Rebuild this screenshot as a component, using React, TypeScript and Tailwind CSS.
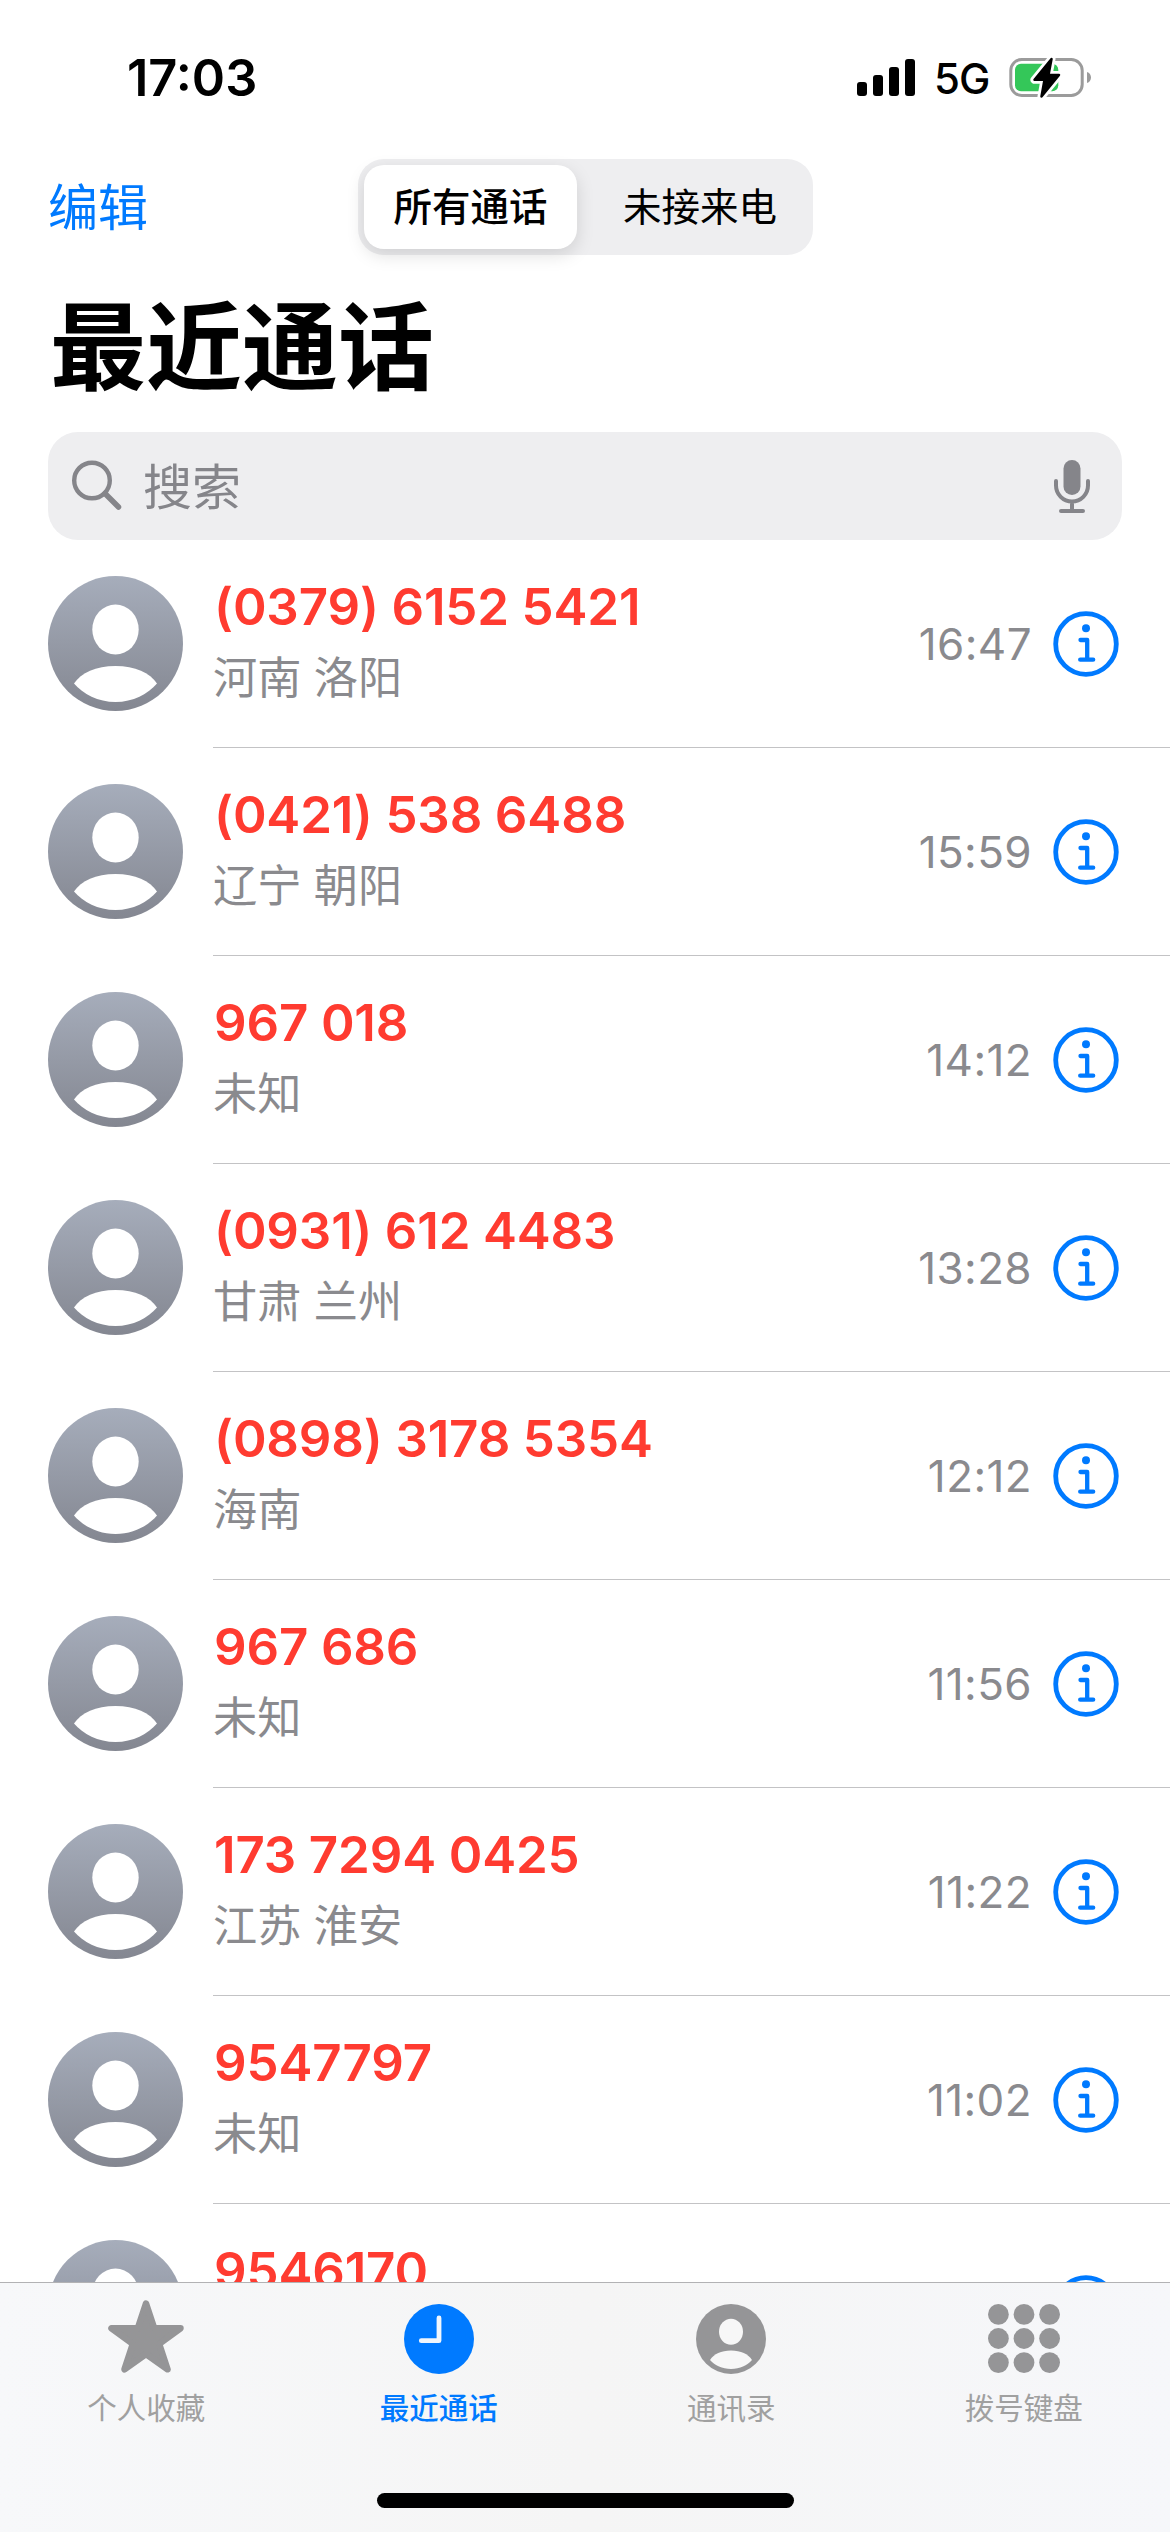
import { useState } from 'react';

interface Call {
  number: string;
  place: string;
  time: string;
}

const CALLS: Call[] = [
  { number: '(0379) 6152 5421', place: '河南 洛阳', time: '16:47' },
  { number: '(0421) 538 6488', place: '辽宁 朝阳', time: '15:59' },
  { number: '967 018', place: '未知', time: '14:12' },
  { number: '(0931) 612 4483', place: '甘肃 兰州', time: '13:28' },
  { number: '(0898) 3178 5354', place: '海南', time: '12:12' },
  { number: '967 686', place: '未知', time: '11:56' },
  { number: '173 7294 0425', place: '江苏 淮安', time: '11:22' },
  { number: '9547797', place: '未知', time: '11:02' },
  { number: '9546170', place: '', time: '' },
];

function StatusBar() {
  return (
    <div className="flex h-[135px] items-start justify-between pl-[127px] pr-[78px] pt-[48px]">
      <span className="text-[50.5px] font-semibold leading-[60px]">17:03</span>
      <div className="flex h-[60px] items-center">
        <svg width="60" height="40" viewBox="0 0 60 40">
          <rect x="1" y="24" width="10" height="14" rx="3" />
          <rect x="17" y="17" width="10" height="21" rx="3" />
          <rect x="33" y="9" width="10" height="29" rx="3" />
          <rect x="49" y="1" width="10" height="37" rx="3" />
        </svg>
        <span className="ml-[18px] w-[58px] pt-[2px] text-[42px] font-[450] leading-[60px] tracking-[-1px]">5G</span>
        <svg className="ml-[16px]" width="84" height="46" viewBox="0 0 84 46">
          <rect x="2.8" y="4.5" width="71.4" height="36" rx="11" fill="none" stroke="#9b9b9b" strokeWidth="3" />
          <path d="M79 17c2.5 .8 4 3 4 5.5s-1.5 4.7-4 5.5z" fill="#9b9b9b" />
          <rect x="7" y="8.7" width="43.3" height="27.5" rx="6" fill="#34c759" />
          <path
            d="M43.5 4 26.5 24.800h10L33.5 41.500 51 20H40.500z"
            stroke="#fff"
            strokeWidth="8"
            strokeLinejoin="round"
          />
          <path d="M43.5 4 26.5 24.800h10L33.5 41.500 51 20H40.500z" stroke="#000" strokeWidth="2.5" strokeLinejoin="round" />
        </svg>
      </div>
    </div>
  );
}

function NavBar() {
  const [tab, setTab] = useState(0);
  return (
    <div className="grid h-[144px] grid-cols-[310px_455px_1fr] items-center pl-[48px]">
      <button className="pt-[2px] text-left text-[50px] leading-none text-[#007aff]">编辑</button>
      <div className="flex h-[96px] w-[455px] rounded-[26px] bg-[#eeeef0] p-[6px] text-[38.5px] leading-none">
        <button
          onClick={() => setTab(0)}
          className={
            tab === 0
              ? 'h-[84px] w-[213px] rounded-[20px] bg-white font-medium shadow-[0_6px_18px_rgba(0,0,0,0.13)]'
              : 'h-[84px] w-[213px]'
          }
        >
          所有通话
        </button>
        <button
          onClick={() => setTab(1)}
          className={
            tab === 1
              ? 'h-[84px] flex-1 rounded-[20px] bg-white font-medium shadow-[0_6px_18px_rgba(0,0,0,0.13)]'
              : 'h-[84px] flex-1 pl-[16px]'
          }
        >
          未接来电
        </button>
      </div>
    </div>
  );
}

function SearchField() {
  return (
    <div className="mx-[48px] flex h-[108px] items-center rounded-[30px] bg-[#eeeef0] pl-[22px] pr-[30px] text-[#85858a]">
      <svg width="54" height="54" viewBox="0 0 54 54" fill="none" stroke="currentColor" strokeLinecap="round">
        <circle cx="22" cy="21.5" r="17.8" strokeWidth="4.4" />
        <path d="M35 34.5 48.5 48" strokeWidth="5.5" />
      </svg>
      <span className="ml-[19px] flex-1 pt-[3px] text-[49px] leading-none">搜索</span>
      <svg width="40" height="56" viewBox="0 0 40 56" fill="none" stroke="currentColor" strokeLinecap="round">
        <rect x="11.5" y="2" width="17" height="35" rx="8.5" fill="currentColor" stroke="none" />
        <path d="M4 23v4.5a16 16 0 0 0 32 0V23M20 44v8M9 53h22" strokeWidth="4" />
      </svg>
    </div>
  );
}

function Avatar() {
  return (
    <svg className="mt-[36px] shrink-0" width="135" height="135" viewBox="0 0 135 135">
      <defs>
        <linearGradient id="avatar" x1="0" y1="0" x2="0" y2="1">
          <stop offset="0" stopColor="#a6adbb" />
          <stop offset="1" stopColor="#848791" />
        </linearGradient>
      </defs>
      <circle cx="67.5" cy="67.5" r="67.5" fill="url(#avatar)" />
      <ellipse cx="67.5" cy="53.5" rx="23.2" ry="25" fill="#fff" />
      <path d="M26 107.5C33 97 48 90 67.5 90s34.5 7 41.5 17.5C100 118 85 126 67.5 126S35 118 26 107.5z" fill="#fff" />
    </svg>
  );
}

function InfoIcon() {
  return (
    <svg width="66" height="66" viewBox="0 0 66 66" fill="none" stroke="#007aff" strokeLinecap="round" strokeLinejoin="round">
      <circle cx="33" cy="33" r="30.3" strokeWidth="4.8" />
      <circle cx="33" cy="17.3" r="4" fill="#007aff" stroke="none" />
      <path d="M27.5 29h6.7v19.7M27.2 48.7h13" strokeWidth="4.3" />
    </svg>
  );
}

function CallRow({ call }: { call: Call }) {
  return (
    <div className="flex h-[208px] shrink-0 pl-[48px]">
      <Avatar />
      <div className="ml-[30px] flex flex-1 border-b border-[#c3c3c5] pr-[51px]">
        <div className="flex-1 pt-[36px]">
          <div className="pl-px text-[51px] font-semibold leading-[62px] tracking-[-0.15px] text-[#ff3b30]">
            {call.number}
          </div>
          <div className="mt-[9px] text-[44.2px] leading-[62px] text-[#8a8a8e]">{call.place}</div>
        </div>
        <div className="flex items-center text-[44px] leading-[66px] text-[#8a8a8e]">
          <span className="mr-[21px] pt-px tracking-[0.4px]">{call.time}</span>
          <InfoIcon />
        </div>
      </div>
    </div>
  );
}

function StarIcon() {
  return (
    <svg width="78" height="78" viewBox="0 0 78 78">
      <path
        d="M39 3.5 47.2 28.3H73.5L52.2 44 60.5 69.3 39 54 17.5 69.3 25.8 44 4.5 28.3H30.8z"
        fill="currentColor"
        stroke="currentColor"
        strokeWidth="6.5"
        strokeLinejoin="round"
      />
    </svg>
  );
}

function ClockIcon() {
  return (
    <svg width="70" height="70" viewBox="0 0 70 70">
      <circle cx="35" cy="35" r="35" fill="currentColor" />
      <path d="M35 14v22.7H17.3" fill="none" stroke="#f0f6fd" strokeWidth="4.8" strokeLinecap="round" strokeLinejoin="round" />
    </svg>
  );
}

function ContactIcon() {
  return (
    <svg width="70" height="70" viewBox="0 0 70 70">
      <circle cx="35" cy="35" r="35" fill="currentColor" />
      <ellipse cx="35" cy="27.7" rx="12" ry="13" fill="#f7f7f7" />
      <path d="M14 56c4-6 11-9.5 21-9.5S52 50 56 56c-5 5.5-12 9-21 9s-16-3.5-21-9z" fill="#f7f7f7" />
    </svg>
  );
}

function KeypadIcon() {
  const pos = [10.4, 36, 61.6];
  return (
    <svg width="72" height="70" viewBox="0 0 72 70" fill="currentColor">
      {pos.map((x, i) => pos.map((_, j) => <circle key={`${i}-${j}`} cx={x} cy={10.4 + j * 24.1} r="10.4" />))}
    </svg>
  );
}

const TABS = [
  { label: '个人收藏', Icon: StarIcon },
  { label: '最近通话', Icon: ClockIcon },
  { label: '通讯录', Icon: ContactIcon },
  { label: '拨号键盘', Icon: KeypadIcon },
];

function TabBar() {
  return (
    <div className="flex h-[250px] shrink-0 flex-col items-center border-t border-[#b2b2b4] bg-linear-to-r from-[#f7f8fa] via-[#f5f5f5] to-[#f6f7fa]">
      <div className="grid w-full grid-cols-4">
        {TABS.map(({ label, Icon }, i) => (
          <button
            key={label}
            className={
              i === 1
                ? 'flex flex-col items-center font-medium text-[#007aff]'
                : 'flex flex-col items-center text-[#959597]'
            }
          >
            <span className="mt-[17px] flex h-[78px] items-center">
              <Icon />
            </span>
            <span
              className={
                i === 1
                  ? 'mt-[10px] text-[29.5px] leading-[40px]'
                  : 'mt-[10px] text-[29.5px] leading-[40px] text-[#a0a0a0]'
              }
            >
              {label}
            </span>
          </button>
        ))}
      </div>
      <div className="mb-[24px] mt-auto h-[15px] w-[417px] rounded-full bg-black" />
    </div>
  );
}

export default function App() {
  return (
    <div className="flex h-[2532px] w-[1170px] flex-col overflow-hidden bg-white font-['Inter','Noto_Sans_CJK_SC',sans-serif] text-black">
      <StatusBar />
      <NavBar />
      <h1 className="h-[153px] pl-[50px] pt-[18px] text-[96px] font-bold leading-[100px]">最近通话</h1>
      <SearchField />
      <div className="flex min-h-0 flex-1 flex-col overflow-hidden">
        {CALLS.map((call) => (
          <CallRow key={call.number} call={call} />
        ))}
      </div>
      <TabBar />
    </div>
  );
}
